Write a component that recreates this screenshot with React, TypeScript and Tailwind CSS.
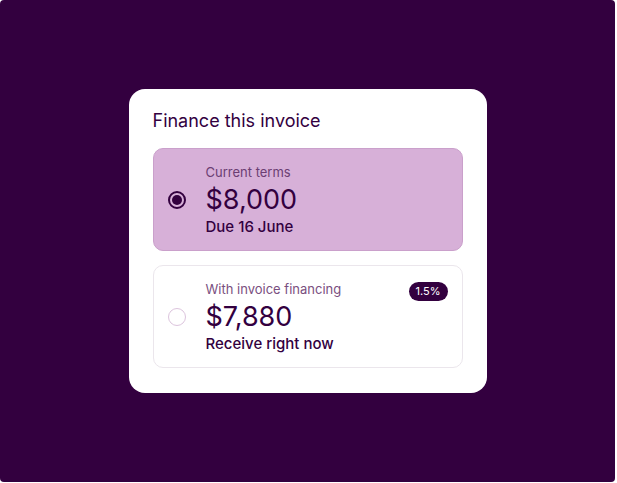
export default function App() {
  return (
    <div className="w-[617px] h-[483px] bg-white">
      <div
        className="w-[615px] h-[482px] rounded-[4px] bg-[#33003f] flex items-center justify-center"
        style={{ fontFamily: "Inter, 'Noto Sans', sans-serif" }}
      >
        <div className="w-[358px] bg-white rounded-[16px] px-6 pt-[20px] pb-[25px] flex flex-col">
          <h1 className="text-[18px] leading-[24px] text-[#33003f] font-normal mb-[15px]">Finance this invoice</h1>

          {/* Current terms */}
          <div className="h-[103px] rounded-[10px] bg-[#d7b0d8] border border-[#caa0cb] flex items-center pl-[14px] pr-4">
            <div className="w-[18px] h-[18px] rounded-full border-2 border-[#33003f] flex items-center justify-center">
              <div className="w-[10px] h-[10px] rounded-full bg-[#33003f]" />
            </div>
            <div className="ml-[20px] flex flex-col">
              <span className="text-[13px] leading-[18px] text-[#6b3e73]">Current terms</span>
              <span className="text-[27px] leading-[32px] text-[#33003f] mt-[3px]">$8,000</span>
              <span className="text-[15px] leading-[20px] text-[#33003f] font-medium mt-[1px]">Due 16 June</span>
            </div>
          </div>

          {/* With financing */}
          <div className="mt-[14px] h-[103px] rounded-[10px] bg-white border border-[#ebe6ec] flex items-center pl-[14px] pr-[14px] relative">
            <div className="w-[18px] h-[18px] rounded-full border-[1.5px] border-[#dcc4dd]" />
            <div className="ml-[20px] flex flex-col">
              <span className="text-[13px] leading-[18px] text-[#7a4f80]">With invoice financing</span>
              <span className="text-[27px] leading-[32px] text-[#33003f] mt-[3px]">$7,880</span>
              <span className="text-[15px] leading-[20px] text-[#33003f] font-medium mt-[1px]">Receive right now</span>
            </div>
            <span className="absolute right-[14px] top-[16px] h-[19px] px-[7px] rounded-full bg-[#33003f] text-white text-[11px] leading-[19px]">1.5%</span>
          </div>
        </div>
      </div>
    </div>
  );
}
